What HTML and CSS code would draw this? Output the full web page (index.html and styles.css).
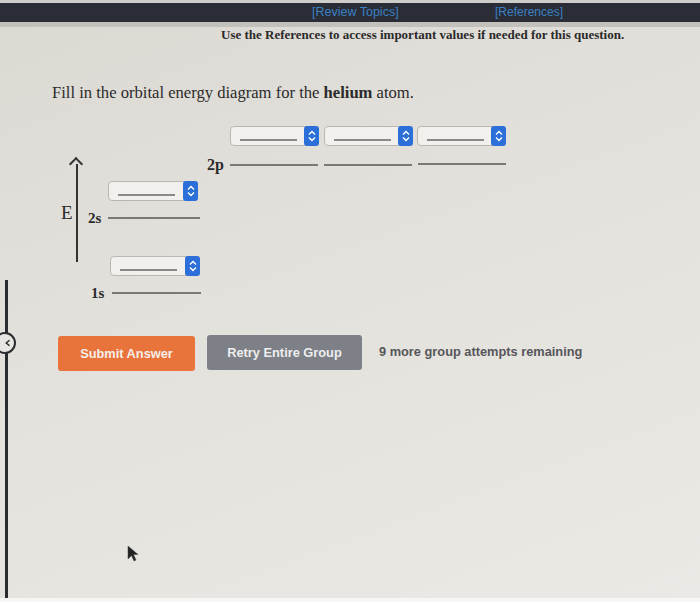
FILE: index.html
```html
<!DOCTYPE html>
<html lang="en">
<head>
    <meta charset="UTF-8">
    <meta name="viewport" content="width=device-width, initial-scale=1.0">
    <title>Orbital Energy Diagram</title>
    <link rel="stylesheet" href="styles.css">
</head>
<body>
    <div class="topbar">
        <a class="top-link review">[Review Topics]</a>
        <a class="top-link refs">[References]</a>
    </div>

    <div class="page">
        <p class="notice">Use the References to access important values if needed for this question.</p>

        <p class="question">Fill in the orbital energy diagram for the <b>helium</b> atom.</p>

        <!-- energy diagram: each level is a line with a dropdown above it -->
        <div class="diagram">
            <div class="axis"></div>
            <span class="axis-label">E</span>

            <div class="select s-2p-a"><span class="blank"></span><span class="handle"><svg viewBox="0 0 14 18" width="14" height="18"><path d="M4 7.5 L7 4.5 L10 7.5 M4 10.5 L7 13.5 L10 10.5" fill="none" stroke="#fff" stroke-width="1.4"/></svg></span></div>
            <div class="select s-2p-b"><span class="blank"></span><span class="handle"><svg viewBox="0 0 14 18" width="14" height="18"><path d="M4 7.5 L7 4.5 L10 7.5 M4 10.5 L7 13.5 L10 10.5" fill="none" stroke="#fff" stroke-width="1.4"/></svg></span></div>
            <div class="select s-2p-c"><span class="blank"></span><span class="handle"><svg viewBox="0 0 14 18" width="14" height="18"><path d="M4 7.5 L7 4.5 L10 7.5 M4 10.5 L7 13.5 L10 10.5" fill="none" stroke="#fff" stroke-width="1.4"/></svg></span></div>
            <span class="level-label l-2p">2p</span>
            <div class="level ln-2p-a"></div>
            <div class="level ln-2p-b"></div>
            <div class="level ln-2p-c"></div>

            <div class="select s-2s"><span class="blank"></span><span class="handle"><svg viewBox="0 0 14 18" width="14" height="18"><path d="M4 7.5 L7 4.5 L10 7.5 M4 10.5 L7 13.5 L10 10.5" fill="none" stroke="#fff" stroke-width="1.4"/></svg></span></div>
            <span class="level-label l-2s">2s</span>
            <div class="level ln-2s"></div>

            <div class="select s-1s"><span class="blank"></span><span class="handle"><svg viewBox="0 0 14 18" width="14" height="18"><path d="M4 7.5 L7 4.5 L10 7.5 M4 10.5 L7 13.5 L10 10.5" fill="none" stroke="#fff" stroke-width="1.4"/></svg></span></div>
            <span class="level-label l-1s">1s</span>
            <div class="level ln-1s"></div>
        </div>

        <div class="actions">
            <button class="btn submit">Submit Answer</button>
            <button class="btn retry">Retry Entire Group</button>
            <span class="attempts">9 more group attempts remaining</span>
        </div>
    </div>

    <div class="side-rule"></div>
    <div class="side-toggle">
        <svg viewBox="0 0 20 20" width="20" height="20"><path d="M12.5 5.5 L7 10 L12.5 14.5" fill="none" stroke="#222" stroke-width="2.2"/></svg>
    </div>

    <svg class="pointer" viewBox="0 0 12 18" width="12" height="18"><path d="M1 1 L1 14 L4.5 10.5 L7 16 L9 15 L6.5 9.5 L11 9.5 Z" fill="#222" stroke="#444" stroke-width="0.5"/></svg>

    <div class="bottom-edge"></div>
</body>
</html>
```
FILE: styles.css
```css
body {
    margin: 0;
    height: 602px;
    overflow: hidden;
    font-family: 'Liberation Serif', 'Times New Roman', serif;
    background: linear-gradient(160deg, #dcd9d3 0%, #e3e1dc 45%, #ebe9e5 100%);
    color: #2b2b2b;
}

.topbar {
    height: 19px;
    border-top: 3px solid #cfcdc9;
    border-bottom: 5px solid #c3c1bc;
    background: #2a2d35;
    position: relative;
    font-family: 'Liberation Sans', Arial, sans-serif;
    font-size: 12.5px;
    line-height: 19px;
}

.top-link {
    position: absolute;
    top: 0;
    color: #3b80c6;
}

.review {
    left: 312px;
}

.refs {
    left: 495px;
    font-size: 12px;
}

.notice {
    margin: 0;
    padding-left: 221px;
    font-size: 13px;
    font-weight: bold;
    line-height: 16px;
    color: #2a2a2a;
}

.question {
    margin: 40px 0 0 52px;
    font-size: 16.6px;
    line-height: 20px;
    color: #2b2b2b;
}

.diagram {
    position: relative;
    height: 185px;
    margin-top: 17px;
}

.axis {
    position: absolute;
    left: 76px;
    top: 44px;
    width: 2px;
    height: 98px;
    background: #333;
}

.axis::before {
    content: '';
    position: absolute;
    left: -5px;
    top: -5px;
    width: 8px;
    height: 8px;
    border-left: 2px solid #333;
    border-top: 2px solid #333;
    transform: rotate(45deg);
}

.axis-label {
    position: absolute;
    left: 61px;
    top: 83px;
    font-size: 19px;
    line-height: 20px;
}

.select {
    position: absolute;
    width: 89px;
    height: 20px;
    box-sizing: border-box;
    border: 1px solid #b9b7b3;
    border-radius: 4px;
    background: #f1f0ed;
}

.blank {
    position: absolute;
    left: 9px;
    top: 12px;
    width: 57px;
    height: 2px;
    background: #8b8a87;
}

.handle {
    position: absolute;
    right: -1px;
    top: -1px;
    width: 15px;
    height: 20px;
    display: flex;
    align-items: center;
    justify-content: center;
    border-radius: 3px;
    background: #2d6fd8;
}

.s-2p-a { left: 230px; top: 6px; }
.s-2p-b { left: 324px; top: 6px; }
.s-2p-c { left: 417px; top: 6px; }
.s-2s { left: 108px; top: 61px; width: 90px; }
.s-1s { left: 110px; top: 136px; width: 90px; }

.level {
    position: absolute;
    height: 2px;
    background: #7a7977;
}

.ln-2p-a { left: 230px; top: 44px; width: 88px; }
.ln-2p-b { left: 324px; top: 44px; width: 88px; }
.ln-2p-c { left: 418px; top: 43px; width: 88px; }
.ln-2s { left: 108px; top: 97px; width: 92px; }
.ln-1s { left: 112px; top: 172px; width: 89px; }

.level-label {
    position: absolute;
    font-size: 16px;
    font-weight: bold;
    line-height: 18px;
}

.l-2p { left: 207px; top: 36px; }
.l-2s { left: 88px; top: 89px; font-size: 15px; }
.l-1s { left: 91px; top: 164px; font-size: 15px; }

.actions {
    display: flex;
    align-items: center;
    margin: 31px 0 0 58px;
    font-family: 'Liberation Sans', Arial, sans-serif;
}

.btn {
    height: 35px;
    border: none;
    border-radius: 3px;
    font-family: inherit;
    font-size: 12.8px;
    font-weight: bold;
    color: #f4efea;
}

.submit {
    width: 137px;
    background: #e8743c;
}

.retry {
    width: 155px;
    margin-left: 12px;
    margin-top: -3px;
    background: #7d8086;
    color: #eeeeef;
}

.attempts {
    margin-left: 17px;
    margin-top: -5px;
    font-size: 12.8px;
    font-weight: bold;
    color: #56565a;
}

.side-rule {
    position: absolute;
    left: 5px;
    top: 280px;
    width: 3px;
    height: 322px;
    background: #2b2c30;
}

.side-toggle {
    position: absolute;
    left: -6px;
    top: 332px;
    width: 18px;
    height: 18px;
    border: 2px solid #2b2c30;
    border-radius: 50%;
    background: #e8e6e2;
    display: flex;
    align-items: center;
    justify-content: center;
}

.side-toggle svg {
    margin-left: 6px;
}

.pointer {
    position: absolute;
    left: 127px;
    top: 545px;
}

.bottom-edge {
    position: absolute;
    left: 0;
    right: 0;
    bottom: 0;
    height: 4px;
    background: #f6f6f5;
}
```
